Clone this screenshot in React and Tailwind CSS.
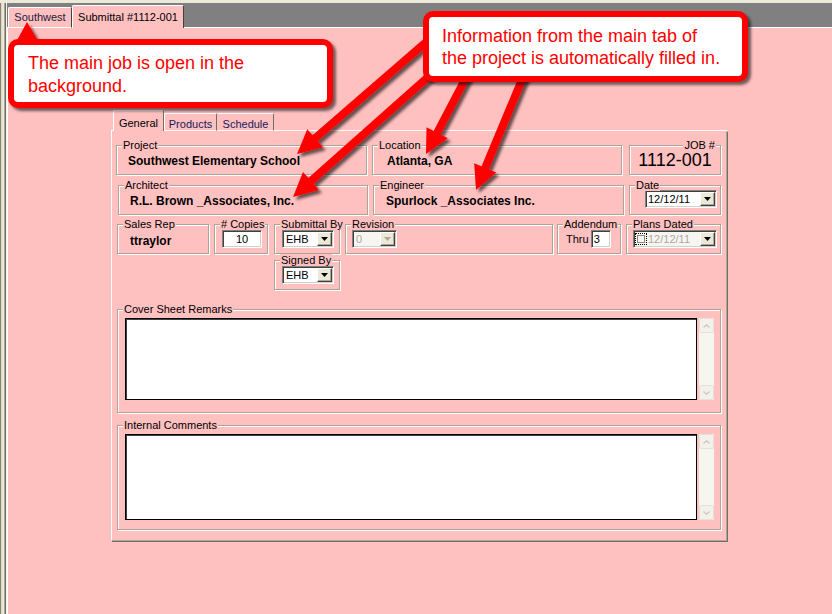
import React from "react";

// sunken 3D edge used by inputs / combos
const sunken =
  "border border-t-[#808080] border-l-[#808080] border-b-white border-r-white shadow-[inset_1px_1px_0_#404040,inset_-1px_-1px_0_#d4d0c8]";

const ARROWS = [
  [440, 30, 297, 154],
  [445, 62, 293, 197],
  [470, 70, 426, 154],
  [526, 70, 476, 190],
];

function headPoints(sx, sy, tx, ty, L = 24, W = 12) {
  const dx = tx - sx;
  const dy = ty - sy;
  const len = Math.hypot(dx, dy);
  const ux = dx / len;
  const uy = dy / len;
  const bx = tx - ux * L;
  const by = ty - uy * L;
  const px = -uy;
  const py = ux;
  return {
    bx,
    by,
    pts: `${tx},${ty} ${bx + px * W},${by + py * W} ${bx - px * W},${by - py * W}`,
  };
}

function Tri({ color = "#000" }) {
  return (
    <svg width="7" height="4" viewBox="0 0 7 4">
      <path d="M0 0h7L3.5 4z" fill={color} />
    </svg>
  );
}

function DropBtn({ color }) {
  return (
    <div className="my-px mr-px flex w-[15px] flex-none items-center justify-center border border-t-white border-l-white border-b-[#404040] border-r-[#404040] bg-[#ece9d8] shadow-[inset_-1px_-1px_0_#aca899]">
      <Tri color={color} />
    </div>
  );
}

function Combo({ value, className, disabled }) {
  return (
    <div className={"flex h-[18px] " + sunken + " " + (disabled ? "bg-[#f7f5f2] " : "bg-white ") + className}>
      <div className={"flex-1 pl-[3px] pt-[2px] text-[11px] leading-[13px] " + (disabled ? "text-[#aca899]" : "text-black")}>
        {value}
      </div>
      <DropBtn color={disabled ? "#aca899" : "#000"} />
    </div>
  );
}

function Group({ label, right, className, children }) {
  return (
    <div className={"relative flex-none border border-[#a9a597] shadow-[inset_1px_1px_0_#fff,1px_1px_0_#fff] " + className}>
      <span
        className={
          "absolute top-[-7px] whitespace-nowrap bg-[#ffc0c0] px-px text-[11px] leading-[12px] text-black " +
          (right ? "right-[4px]" : "left-[5px]")
        }
      >
        {label}
      </span>
      {children}
    </div>
  );
}

function Value({ children, className }) {
  return <div className={"whitespace-nowrap text-[12px] font-bold leading-[14px] text-black " + className}>{children}</div>;
}

function Scroll() {
  return (
    <div className="ml-[2px] flex w-[15px] flex-none flex-col justify-between bg-[#f6f5f0]">
      <div className="flex h-[15px] items-center justify-center rounded-[2px] border border-[#e4e2d8] bg-[#f2f1eb]">
        <svg width="7" height="4" viewBox="0 0 7 4">
          <path d="M0.5 3.5L3.5 0.8L6.5 3.5" stroke="#cdcbc0" strokeWidth="1.4" fill="none" />
        </svg>
      </div>
      <div className="flex h-[15px] items-center justify-center rounded-[2px] border border-[#e4e2d8] bg-[#f2f1eb]">
        <svg width="7" height="4" viewBox="0 0 7 4">
          <path d="M0.5 0.5L3.5 3.2L6.5 0.5" stroke="#cdcbc0" strokeWidth="1.4" fill="none" />
        </svg>
      </div>
    </div>
  );
}

function Memo({ h }) {
  return (
    <div className="flex pl-[7px] pt-[8px]">
      <div className={"w-[572px] border border-black bg-white shadow-[inset_1px_1px_0_#404040] " + h} />
      <Scroll />
    </div>
  );
}

export default function App() {
  return (
    <div className="relative h-[614px] w-[832px] overflow-hidden bg-[#ffc0c0] font-['Liberation_Sans',Arial,sans-serif] text-black">
      <div className="h-[3px] bg-[#ece9d8]" />
      <div className="flex h-[611px]">
        {/* left edge of the host window */}
        <div className="flex h-full w-[7px] flex-none">
          <div className="w-px bg-[#8a8778]" />
          <div className="w-px bg-[#d8d5c6]" />
          <div className="w-[2px] bg-[#ece9d8]" />
          <div className="w-px bg-[#a9a696]" />
          <div className="w-px bg-[#716f64]" />
          <div className="w-px bg-[#f4f3ee]" />
        </div>

        <div className="flex flex-1 flex-col">
          {/* document tabs */}
          <div className="flex h-[25px] flex-none items-end bg-[#808080]">
            <div className="h-px w-px bg-white" />
            <div className="flex h-[21px] w-[64px] items-center justify-center rounded-t-[2px] border border-t-white border-l-white border-r-[#404040] border-b-white bg-[#ffc0c0] text-[11px] text-[#20203a]">
              Southwest
            </div>
            <div className="flex h-[23px] w-[112px] items-start justify-center rounded-t-[2px] border-t border-l border-r border-t-white border-l-white border-r-[#404040] bg-[#ffc0c0] pt-[3px] text-[11px]">
              Submittal #1112-001
            </div>
            <div className="h-px flex-1 bg-white" />
          </div>

          <div className="flex-1 border-l border-white pl-[103px] pt-[82px]">
            {/* inner tabs */}
            <div className="flex h-[21px] w-[616px] items-end">
              <div className="h-px w-[2px] bg-white" />
              <div className="flex h-[21px] w-[51px] items-start justify-center rounded-t-[2px] border-t border-l border-r border-t-white border-l-white border-r-[#716f64] pt-[4px] text-[11px]">
                General
              </div>
              <div className="flex h-[18px] w-[53px] items-start justify-center rounded-t-[2px] border border-t-white border-l-white border-r-[#716f64] border-b-white pt-[2px] text-[11px] text-[#1a1a5a]">
                Products
              </div>
              <div className="flex h-[18px] w-[57px] items-start justify-center rounded-t-[2px] border border-t-white border-l-[#ffc0c0] border-r-[#716f64] border-b-white pt-[2px] text-[11px] text-[#1a1a5a]">
                Schedule
              </div>
              <div className="h-px flex-1 bg-white" />
            </div>

            {/* panel body */}
            <div className="flex h-[410px] w-[616px] flex-col border-l border-r border-b border-l-white border-r-[#aca899] border-b-[#aca899] pl-[4px] pt-[14px] shadow-[1px_1px_0_#716f64]">
              <div className="flex">
                <Group label="Project" className="h-[30px] w-[251px]">
                  <Value className="pl-[11px] pt-[8px]">Southwest Elementary School</Value>
                </Group>
                <Group label="Location" className="ml-[5px] h-[30px] w-[250px]">
                  <Value className="pl-[14px] pt-[8px]">Atlanta, GA</Value>
                </Group>
                <Group label="JOB #" right className="ml-[7px] h-[30px] w-[92px]">
                  <div className="pt-[5px] text-center text-[18px] leading-[18px]">1112-001</div>
                </Group>
              </div>

              <div className="mt-[10px] flex">
                <Group label="Architect" className="ml-[2px] h-[30px] w-[250px]">
                  <Value className="pl-[11px] pt-[8px]">R.L. Brown _Associates, Inc.</Value>
                </Group>
                <Group label="Engineer" className="ml-[5px] h-[30px] w-[251px]">
                  <Value className="pl-[12px] pt-[8px]">Spurlock _Associates Inc.</Value>
                </Group>
                <Group label="Date" className="ml-[5px] h-[30px] w-[92px]">
                  <div className="pl-[15px] pt-[4px]">
                    <div className={"flex h-[18px] w-[72px] bg-white " + sunken}>
                      <div className="flex-1 pl-[2px] pt-[2px] text-[11px] leading-[13px]">12/12/11</div>
                      <DropBtn />
                    </div>
                  </div>
                </Group>
              </div>

              <div className="mt-[9px] flex">
                <Group label="Sales Rep" className="ml-[1px] h-[30px] w-[92px]">
                  <Value className="pl-[12px] pt-[9px]">ttraylor</Value>
                </Group>
                <Group label="# Copies" className="ml-[5px] h-[30px] w-[54px]">
                  <div className="pl-[7px] pt-[5px]">
                    <div className={"h-[18px] w-[40px] bg-white pt-[2px] text-center text-[11px] leading-[13px] " + sunken}>10</div>
                  </div>
                </Group>
                <Group label="Submittal By" className="ml-[6px] h-[30px] w-[66px]">
                  <div className="pl-[7px] pt-[5px]">
                    <Combo value="EHB" className="w-[52px]" />
                  </div>
                </Group>
                <Group label="Revision" className="ml-[5px] h-[30px] w-[208px]">
                  <div className="pl-[6px] pt-[5px]">
                    <Combo value="0" disabled className="w-[45px]" />
                  </div>
                </Group>
                <Group label="Addendum" className="ml-[4px] h-[30px] w-[64px]">
                  <div className="flex items-center pl-[8px] pt-[5px]">
                    <span className="text-[11px] leading-[13px]">Thru</span>
                    <div className={"ml-[2px] h-[18px] w-[20px] bg-white pl-[2px] pt-[2px] text-[11px] leading-[13px] " + sunken}>3</div>
                  </div>
                </Group>
                <Group label="Plans Dated" className="ml-[5px] h-[30px] w-[95px]">
                  <div className="pl-[6px] pt-[5px]">
                    <div className={"flex h-[18px] w-[84px] bg-[#f7f5f2] " + sunken}>
                      <div className="ml-[1px] mt-[2px] h-[12px] w-[12px] flex-none border border-dotted border-black p-px">
                        <div className="h-full w-full border border-[#8a8778]" />
                      </div>
                      <div className="flex-1 pl-px pt-[2px] text-[11px] leading-[13px] text-[#aca899]">12/12/11</div>
                      <DropBtn />
                    </div>
                  </div>
                </Group>
              </div>

              <div className="mt-[6px] flex">
                <Group label="Signed By" className="ml-[158px] h-[30px] w-[66px]">
                  <div className="pl-[7px] pt-[5px]">
                    <Combo value="EHB" className="w-[52px]" />
                  </div>
                </Group>
              </div>

              <Group label="Cover Sheet Remarks" className="ml-[1px] mt-[19px] h-[104px] w-[604px]">
                <Memo h="h-[82px]" />
              </Group>

              <Group label="Internal Comments" className="ml-[1px] mt-[12px] h-[105px] w-[604px]">
                <Memo h="h-[86px]" />
              </Group>
            </div>
          </div>
        </div>
      </div>

      {/* annotation arrows */}
      <svg className="pointer-events-none absolute left-0 top-0" width="832" height="614">
        <defs>
          <filter id="sh" x="-20%" y="-20%" width="140%" height="140%">
            <feDropShadow dx="3" dy="3" stdDeviation="1.6" floodColor="#000" floodOpacity="0.6" />
          </filter>
        </defs>
        <g filter="url(#sh)">
          <polygon points="27,22 15,44 40,44" fill="#ff0000" />
          {ARROWS.map(([sx, sy, tx, ty], i) => {
            const h = headPoints(sx, sy, tx, ty);
            return (
              <g key={i}>
                <line x1={sx} y1={sy} x2={h.bx} y2={h.by} stroke="#ff0000" strokeWidth="8" strokeLinecap="round" />
                <polygon points={h.pts} fill="#ff0000" />
              </g>
            );
          })}
        </g>
      </svg>

      {/* callouts */}
      <div className="absolute left-[8px] top-[39px] h-[69px] w-[325px] rounded-[10px] border-[6px] border-[#ff0000] bg-white pl-[14px] pt-[7px] text-[18px] leading-[23px] text-[#ff0000] shadow-[3px_3px_3px_rgba(0,0,0,0.55)]">
        The main job is open in the
        <br />
        background.
      </div>
      <div className="absolute left-[423px] top-[11px] h-[71px] w-[325px] rounded-[10px] border-[6px] border-[#ff0000] bg-white pl-[13px] pt-[8px] text-[18px] leading-[22px] text-[#ff0000] shadow-[3px_3px_3px_rgba(0,0,0,0.55)]">
        Information from the main tab of
        <br />
        the project is automatically filled in.
      </div>
    </div>
  );
}
